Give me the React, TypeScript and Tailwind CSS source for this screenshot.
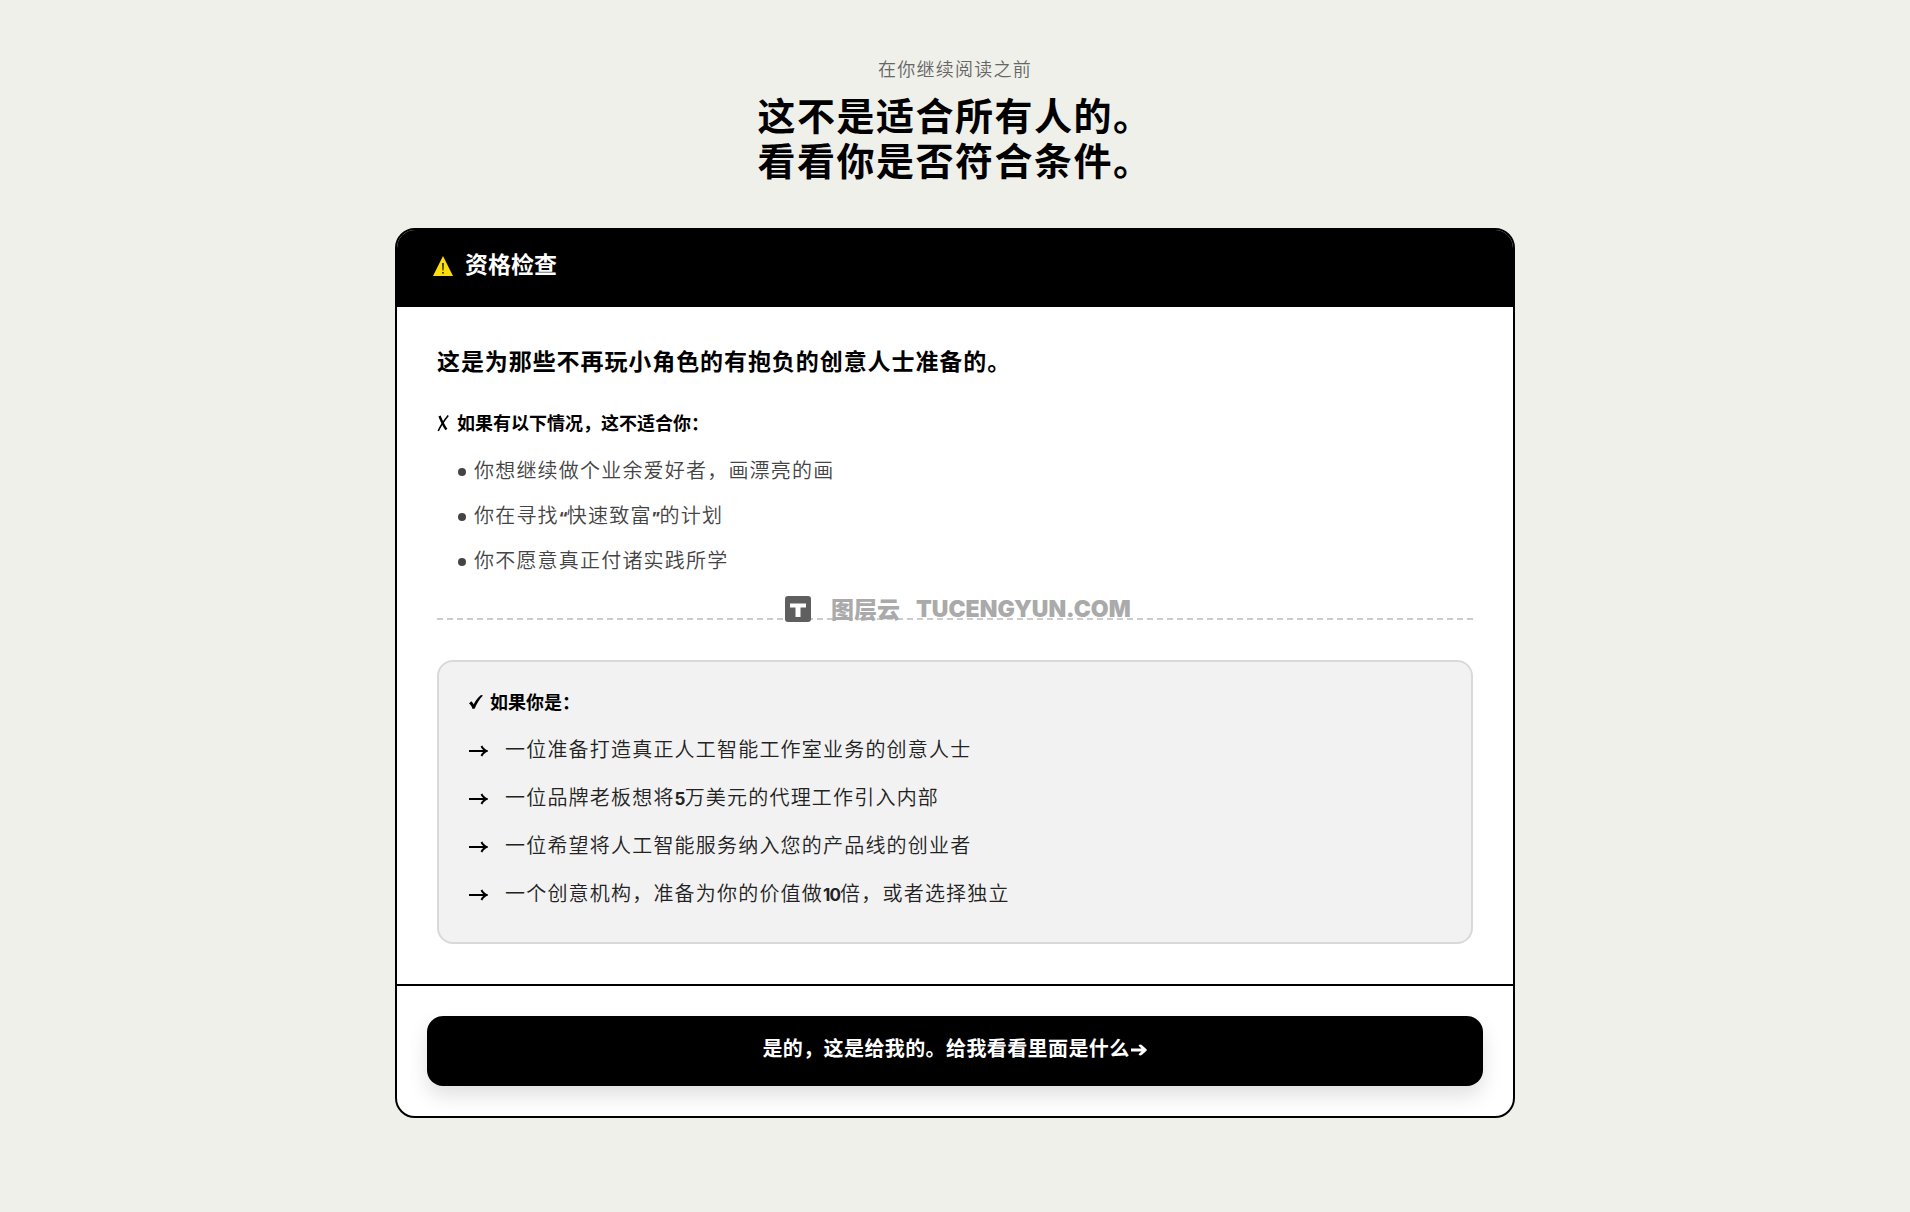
import type { ReactNode } from 'react';

const NOT_FOR_YOU: ReactNode[] = [
  '你想继续做个业余爱好者，画漂亮的画',
  <>
    你在寻找<Quote>“</Quote>快速致富<Quote>”</Quote>的计划
  </>,
  '你不愿意真正付诸实践所学',
];

const FOR_YOU: ReactNode[] = [
  '一位准备打造真正人工智能工作室业务的创意人士',
  <>
    一位品牌老板想将<Digits>5</Digits>万美元的代理工作引入内部
  </>,
  '一位希望将人工智能服务纳入您的产品线的创业者',
  <>
    一个创意机构，准备为你的价值做<Digits>10</Digits>倍，或者选择独立
  </>,
];

function Digits({ children }: { children: ReactNode }) {
  return <span className="font-['Inter'] text-[17px] leading-none font-bold tracking-tighter">{children}</span>;
}

function Quote({ children }: { children: ReactNode }) {
  return <span className="font-['Inter'] text-[14px] leading-none font-black tracking-tighter">{children}</span>;
}

function WarningIcon() {
  return (
    <svg viewBox="0 0 20 20" className="mt-1.5 h-5 w-5" aria-hidden="true">
      <path d="M10 0 20 20H0Z" fill="#fbdc0c" />
      <path d="M9.2 7h1.6l-.3 7.500h-1z" fill="#111" />
      <circle cx="10" cy="16.8" r=".9" fill="#111" />
    </svg>
  );
}

function CrossIcon() {
  return (
    <svg viewBox="0 0 12 18" className="mt-0.5 h-[18px] w-3" fill="none" stroke="#000" aria-hidden="true">
      <path d="M11.200 1.500C8 5.500 4 11 1.200 17" strokeWidth="1.600" />
      <path d="M2.500 2c1.500 3.500 4 10 7 13.500" strokeWidth="2.400" />
    </svg>
  );
}

function CheckIcon() {
  return (
    <svg viewBox="0 0 14 14" className="mt-px h-[14px] w-[14px]" aria-hidden="true">
      <path d="M0 8.500 2.200 6.200C3.400 7 4.100 8 4.700 9.400 6.300 6.100 9 2.300 12 0L14 .6C10.500 4.200 7.800 8.500 5.800 13.600L3.600 14C2.800 11.600 1.700 9.700 0 8.500Z" />
    </svg>
  );
}

function ArrowIcon() {
  return (
    <svg viewBox="0 0 19 14" className="mt-1 h-[14px] w-[19px] shrink-0" aria-hidden="true">
      <path d="M0 5.900h14.200C13 5 12.200 3.900 11.600 2.500L13.300 1.600C14.500 4 16.400 5.700 19 6.600V7.400C16.400 8.300 14.500 10 13.300 12.400L11.600 11.500C12.200 10.100 13 9 14.200 8.100H0Z" />
    </svg>
  );
}

function ButtonArrow() {
  return (
    <svg viewBox="0 0 18 14" className="mt-[3px] h-[14px] w-[18px]" fill="#fff" aria-hidden="true">
      <path d="M1 5.600h10.500L8.500 2.800C9.500 1.200 11 1.400 12 2.300L16.500 6.200Q17.300 7 16.500 7.800L12 11.700C11 12.600 9.500 12.800 8.500 11.200L11.500 8.400H1Z" />
    </svg>
  );
}

function Watermark() {
  return (
    <div className="pointer-events-none absolute -top-6 left-[348px] flex h-[26px] items-center whitespace-nowrap text-[#aaaaaa]">
      <svg viewBox="0 0 26 26" className="h-[26px] w-[26px]" aria-hidden="true">
        <rect width="26" height="26" rx="3" fill="#5f5f5f" />
        <path d="M5 7.500h16v4h-5.500v9.500h-5v-9.500H5z" fill="#fff" />
      </svg>
      <span className="ml-5 pb-0.5 text-[23px] leading-[22px] font-black">图层云</span>
      <span className="ml-4 font-['Inter'] text-[23px] leading-[26px] font-black">TUCENGYUN.COM</span>
    </div>
  );
}

export default function App() {
  return (
    <main
      lang="zh-CN"
      className="min-h-screen bg-[#eff0ea] px-6 pt-[54px] pb-16 font-['Noto_Sans_CJK_SC',sans-serif] text-black"
    >
      <header className="text-center">
        <p className="text-[18px] leading-7 font-[350] tracking-[0.07em] text-[#666666]">在你继续阅读之前</p>
        <h1 className="mt-[9px] text-[38px] leading-[45px] font-bold tracking-[0.04em]">
          这不是适合所有人的。
          <br />
          看看你是否符合条件。
        </h1>
      </header>

      <section className="mx-auto mt-[47px] max-w-[1120px] overflow-hidden rounded-[20px] border-2 border-black bg-white">
        <div className="flex items-center gap-3 bg-black px-9 pt-[17px] pb-7 text-white">
          <WarningIcon />
          <h2 className="text-[23px] leading-8 font-bold">资格检查</h2>
        </div>

        <div className="px-10 pt-[38px] pb-10">
          <h3 className="text-[23px] leading-[30px] font-bold tracking-[0.04em]">
            这是为那些不再玩小角色的有抱负的创意人士准备的。
          </h3>

          <h4 className="mt-[33px] flex items-center gap-2 text-[18px] leading-7 font-bold">
            <CrossIcon />
            如果有以下情况，这不适合你：
          </h4>
          <ul className="mt-[19px] space-y-[15px] pl-[21px]">
            {NOT_FOR_YOU.map((item, i) => (
              <li key={i} className="flex items-center gap-2 text-[20px] leading-[30px] font-[350] tracking-[0.06em] text-[#444444]">
                <span className="mt-1 h-2 w-2 rounded-full bg-[#444444]" />
                <span>{item}</span>
              </li>
            ))}
          </ul>

          <div className="relative mt-[43px] border-t-2 border-dashed border-[#cccccc]">
            <Watermark />
          </div>

          <div className="mt-10 rounded-2xl border-2 border-[#d9d9d9] bg-[#f2f2f2] px-[30px] pt-[25px] pb-[33px]">
            <h4 className="flex items-center gap-[7px] text-[18px] leading-7 font-bold">
              <CheckIcon />
              如果你是：
            </h4>
            <ul className="mt-[18px] space-y-4">
              {FOR_YOU.map((item, i) => (
                <li key={i} className="flex items-center gap-[17px] text-[20px] leading-8 font-[350] tracking-[0.06em] text-[#222222]">
                  <ArrowIcon />
                  <span>{item}</span>
                </li>
              ))}
            </ul>
          </div>
        </div>

        <div className="border-t-2 border-black p-[30px]">
          <button
            type="button"
            className="flex h-[70px] w-full items-center justify-center rounded-2xl bg-black pb-1.5 text-[20px] font-bold tracking-[0.02em] text-white shadow-[0_10px_20px_rgba(0,0,0,0.12)]"
          >
            是的，这是给我的。给我看看里面是什么
            <ButtonArrow />
          </button>
        </div>
      </section>
    </main>
  );
}
